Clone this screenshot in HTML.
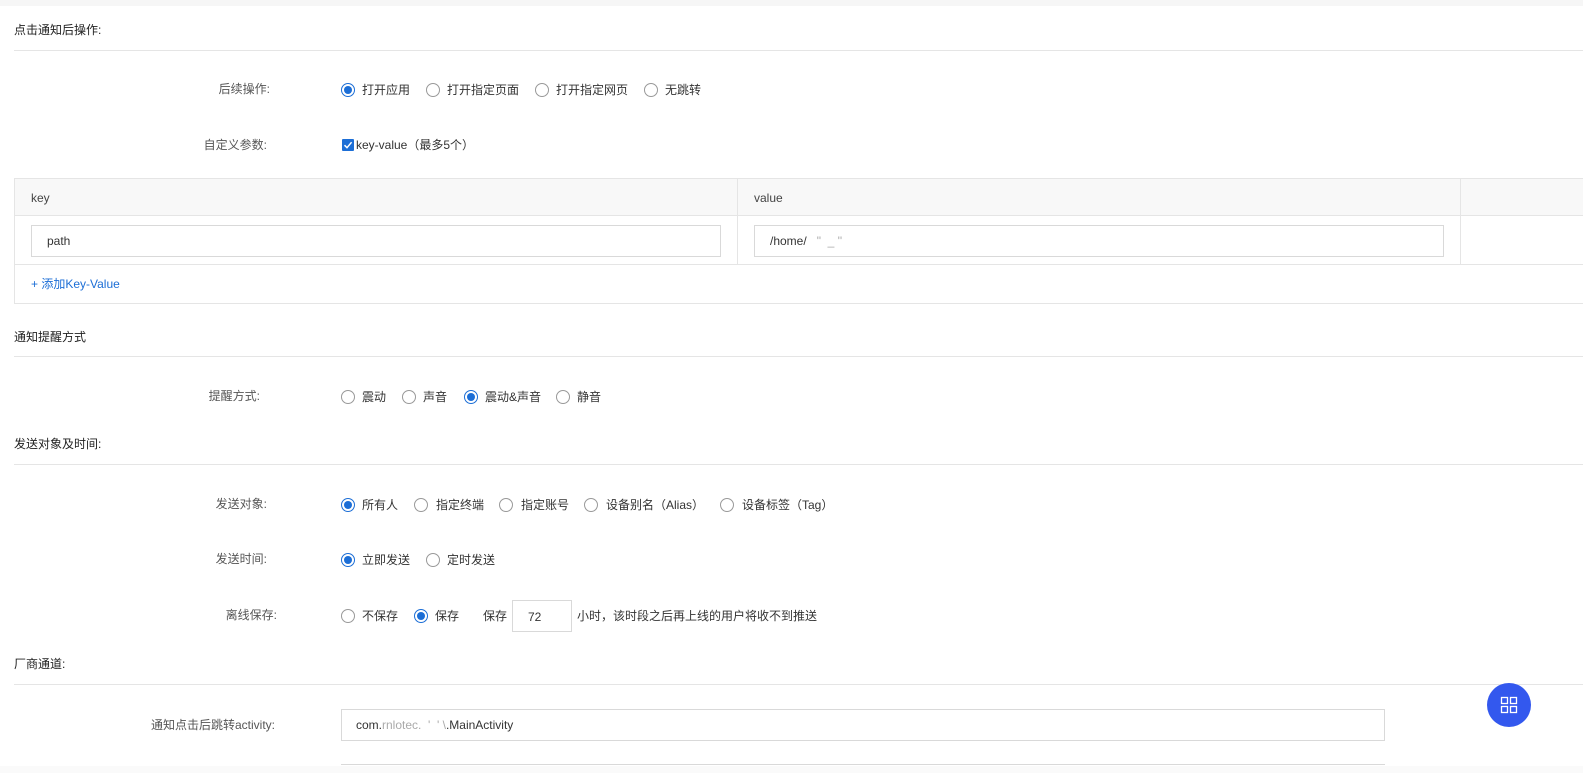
<!DOCTYPE html>
<html><head><meta charset="utf-8"><style>
*{margin:0;padding:0;box-sizing:border-box}
body{width:1583px;height:773px;overflow:hidden;background:#fff;position:relative;font-family:"Liberation Sans","Noto Sans CJK SC",sans-serif;font-size:12px;color:#333}
.a{position:absolute;white-space:nowrap;line-height:14px}
.h{position:absolute;left:14px;font-size:12px;color:#222;line-height:14px}
.ln{position:absolute;left:14px;right:0;height:1px;background:#e5e5e5}
.lb{position:absolute;text-align:right;color:#555;line-height:14px;white-space:nowrap}
.r{position:absolute;width:14px;height:14px;border:1px solid #999;border-radius:50%;background:#fff}
.r.on{border-color:#1c6ed6}
.r.on::after{content:"";position:absolute;left:2px;top:2px;width:8px;height:8px;border-radius:50%;background:#1c6ed6}
.box{position:absolute;border:1px solid #d9d9d9;background:#fff}
</style></head><body>
<div style="position:absolute;left:0;top:0;width:1583px;height:6px;background:#f6f6f6"></div>

<div class="h" style="top:23px">点击通知后操作:</div>
<div class="ln" style="top:50px"></div>

<div class="lb" style="left:150px;width:120px;top:82px">后续操作:</div>
<div class="r on" style="left:341px;top:83px"></div><div class="a" style="left:362px;top:83px">打开应用</div>
<div class="r" style="left:426px;top:83px"></div><div class="a" style="left:447px;top:83px">打开指定页面</div>
<div class="r" style="left:535px;top:83px"></div><div class="a" style="left:556px;top:83px">打开指定网页</div>
<div class="r" style="left:644px;top:83px"></div><div class="a" style="left:665px;top:83px">无跳转</div>

<div class="lb" style="left:150px;width:117px;top:138px">自定义参数:</div>
<div style="position:absolute;left:342px;top:139px;width:12px;height:12px;background:#1c6ed6;border-radius:1px"><svg width="12" height="12" style="position:absolute;left:0;top:0"><path d="M2.5 6.2 L5 8.7 L9.6 3.2" stroke="#fff" stroke-width="1.5" fill="none"/></svg></div>
<div class="a" style="left:356px;top:138px">key-value（最多5个）</div>

<div style="position:absolute;left:14px;top:178px;width:1580px;height:126px;border:1px solid #e5e5e5;border-right:none"></div>
<div style="position:absolute;left:15px;top:179px;width:1570px;height:37px;background:#f8f8f8;border-bottom:1px solid #e5e5e5"></div>
<div style="position:absolute;left:15px;top:264px;width:1570px;height:1px;background:#e5e5e5"></div>
<div style="position:absolute;left:737px;top:179px;width:1px;height:85px;background:#e5e5e5"></div>
<div style="position:absolute;left:1460px;top:179px;width:1px;height:85px;background:#e5e5e5"></div>
<div class="a" style="left:31px;top:191px;color:#444">key</div>
<div class="a" style="left:754px;top:191px;color:#444">value</div>
<div class="box" style="left:31px;top:225px;width:690px;height:32px"></div>
<div class="a" style="left:47px;top:234px;color:#333">path</div>
<div class="box" style="left:754px;top:225px;width:690px;height:32px"></div>
<div class="a" style="left:770px;top:234px;color:#333">/home/<span style="color:#aaa">&nbsp;&nbsp;&nbsp;"&nbsp;&nbsp;_ ''</span></div>
<div class="a" style="left:31px;top:277px;color:#1c6ed6">+ 添加Key-Value</div>

<div class="h" style="top:330px">通知提醒方式</div>
<div class="ln" style="top:356px"></div>
<div class="lb" style="left:150px;width:110px;top:389px">提醒方式:</div>
<div class="r" style="left:341px;top:390px"></div><div class="a" style="left:362px;top:390px">震动</div>
<div class="r" style="left:402px;top:390px"></div><div class="a" style="left:423px;top:390px">声音</div>
<div class="r on" style="left:464px;top:390px"></div><div class="a" style="left:485px;top:390px">震动&amp;声音</div>
<div class="r" style="left:556px;top:390px"></div><div class="a" style="left:577px;top:390px">静音</div>

<div class="h" style="top:437px">发送对象及时间:</div>
<div class="ln" style="top:464px"></div>
<div class="lb" style="left:150px;width:117px;top:497px">发送对象:</div>
<div class="r on" style="left:341px;top:498px"></div><div class="a" style="left:362px;top:498px">所有人</div>
<div class="r" style="left:414px;top:498px"></div><div class="a" style="left:436px;top:498px">指定终端</div>
<div class="r" style="left:499px;top:498px"></div><div class="a" style="left:521px;top:498px">指定账号</div>
<div class="r" style="left:584px;top:498px"></div><div class="a" style="left:606px;top:498px">设备别名（Alias）</div>
<div class="r" style="left:720px;top:498px"></div><div class="a" style="left:742px;top:498px">设备标签（Tag）</div>

<div class="lb" style="left:150px;width:117px;top:552px">发送时间:</div>
<div class="r on" style="left:341px;top:553px"></div><div class="a" style="left:362px;top:553px">立即发送</div>
<div class="r" style="left:426px;top:553px"></div><div class="a" style="left:447px;top:553px">定时发送</div>

<div class="lb" style="left:150px;width:127px;top:608px">离线保存:</div>
<div class="r" style="left:341px;top:609px"></div><div class="a" style="left:362px;top:609px">不保存</div>
<div class="r on" style="left:414px;top:609px"></div><div class="a" style="left:435px;top:609px">保存</div>
<div class="a" style="left:483px;top:609px">保存</div>
<div class="box" style="left:512px;top:600px;width:60px;height:32px"></div>
<div class="a" style="left:528px;top:610px">72</div>
<div class="a" style="left:577px;top:609px">小时，该时段之后再上线的用户将收不到推送</div>

<div class="h" style="top:657px">厂商通道:</div>
<div class="ln" style="top:684px"></div>
<div class="lb" style="left:100px;width:175px;top:718px">通知点击后跳转activity:</div>
<div class="box" style="left:341px;top:709px;width:1044px;height:32px"></div>
<div class="a" style="left:356px;top:718px">com.<span style="color:#aaa">rnlotec.&nbsp;&nbsp;'&nbsp;&nbsp;'&nbsp;\</span>.MainActivity</div>
<div style="position:absolute;left:341px;top:764px;width:1044px;height:1px;background:#d9d9d9"></div>
<div style="position:absolute;left:0;top:766px;width:1583px;height:7px;background:#fafafa"></div>

<div style="position:absolute;left:1487px;top:683px;width:44px;height:44px;border-radius:50%;background:#3358ee"></div>
<svg style="position:absolute;left:1500px;top:696px" width="18" height="18"><g fill="none" stroke="#fff" stroke-width="1.3"><rect x="1.5" y="1.5" width="6" height="6"/><rect x="10.5" y="1.5" width="6" height="6"/><rect x="1.5" y="10.5" width="6" height="6"/><rect x="10.5" y="10.5" width="6" height="6"/></g></svg>
</body></html>
